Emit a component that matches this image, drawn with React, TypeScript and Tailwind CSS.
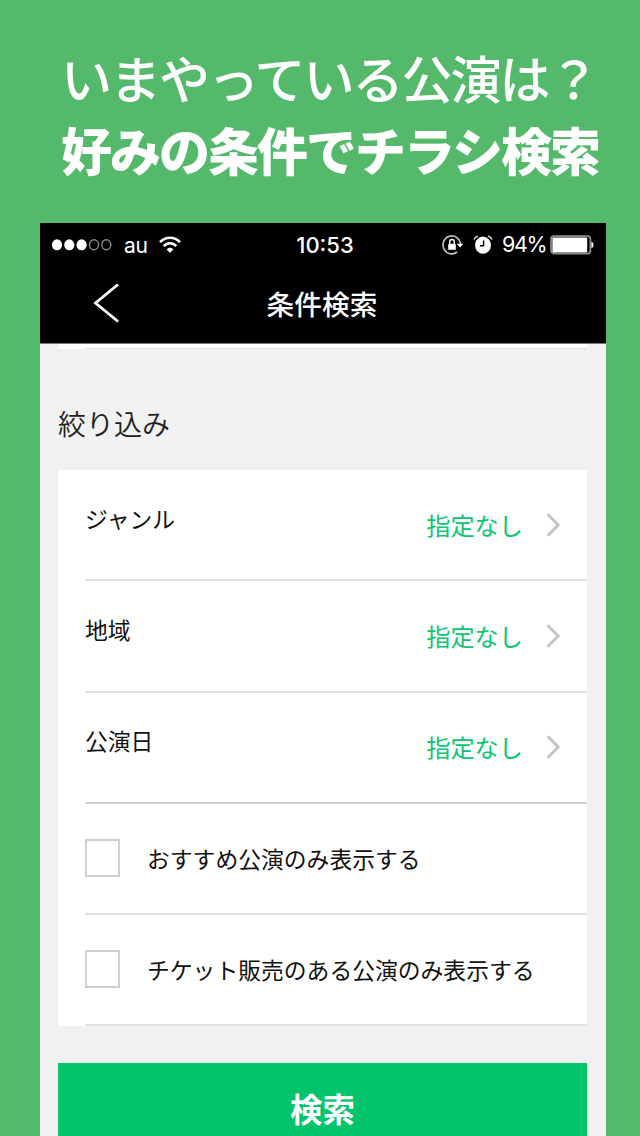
import type { ReactNode } from "react";

const filters = [
  { label: "ジャンル", value: "指定なし", divider: "bg-[#e3e3e5]" },
  { label: "地域", value: "指定なし", divider: "bg-[#e3e3e5]" },
  { label: "公演日", value: "指定なし", divider: "bg-[#cfcfd3]" },
];

const options = ["おすすめ公演のみ表示する", "チケット販売のある公演のみ表示する"];

function SignalDots() {
  return (
    <svg width="62" height="14" viewBox="0 0 62 14" className="shrink-0">
      <ellipse cx="6" cy="6.8" rx="5.1" ry="5.5" fill="#fff" />
      <ellipse cx="18.3" cy="6.8" rx="5.1" ry="5.5" fill="#fff" />
      <ellipse cx="30.6" cy="6.8" rx="5.1" ry="5.5" fill="#fff" />
      <ellipse cx="43" cy="6.8" rx="4.5" ry="5" fill="none" stroke="#8a8a8a" strokeWidth="1.4" />
      <ellipse cx="55.3" cy="6.8" rx="4.5" ry="5" fill="none" stroke="#8a8a8a" strokeWidth="1.4" />
    </svg>
  );
}

function WifiIcon() {
  return (
    <svg width="22" height="18" viewBox="0 0 22 18" className="shrink-0" fill="none" stroke="#fff">
      <path d="M1 6.2 C6.5 0.2 15.5 0.2 21 6.2" strokeWidth="2.6" />
      <path d="M4.7 10.2 C8.2 6.3 13.8 6.3 17.3 10.2" strokeWidth="2.5" />
      <path d="M11 17 L7.7 13.4 C9.5 11.2 12.5 11.2 14.3 13.4 Z" fill="#fff" stroke="none" />
    </svg>
  );
}

function RotationLockIcon() {
  return (
    <svg width="22" height="22" viewBox="0 0 22 22" className="shrink-0">
      <path
        d="M15.2 17.9 A8.7 9 0 1 1 18.4 10"
        fill="none"
        stroke="#c4c4c4"
        strokeWidth="1.6"
      />
      <path d="M14.8 9.8 H21.4 L18.1 13.6 Z" fill="#fff" />
      <rect x="6.2" y="9.8" width="7.6" height="6" rx="0.6" fill="#fff" />
      <path d="M7.7 10.2 V8 A2.3 2.5 0 0 1 12.3 8 V10.2" fill="none" stroke="#fff" strokeWidth="1.4" />
    </svg>
  );
}

function AlarmIcon() {
  return (
    <svg width="20" height="20" viewBox="0 0 20 20" className="shrink-0">
      <ellipse cx="10" cy="10.2" rx="7.9" ry="8.6" fill="#fff" />
      <path d="M10.6 5.4 V10.8 H7" fill="none" stroke="#000" strokeWidth="1.5" />
      <path
        d="M1.2 4.6 C1.6 2.8 3.2 1.4 5 1.2 M15 1.2 C16.8 1.4 18.4 2.8 18.8 4.6"
        fill="none"
        stroke="#d8d8d8"
        strokeWidth="1.5"
      />
    </svg>
  );
}

function BatteryIcon() {
  return (
    <svg width="44" height="20" viewBox="0 0 44 20" className="shrink-0">
      <rect x="1" y="1.2" width="39.4" height="17.4" rx="3" fill="none" stroke="#8c8c8c" strokeWidth="1.8" />
      <rect x="2.4" y="2.4" width="34.8" height="15" rx="1" fill="#fff" />
      <path d="M41.4 6.8 C44.2 7.4 44.2 12.4 41.4 13 Z" fill="#fff" />
    </svg>
  );
}

function Chevron() {
  return (
    <svg width="15" height="26" viewBox="0 0 15 26" className="shrink-0">
      <path d="M1.6 2.2 L12.2 13 L1.6 23.8" fill="none" stroke="#c4c4c9" strokeWidth="2.9" />
    </svg>
  );
}

function StatusBar() {
  return (
    <div className="grid h-[44px] grid-cols-3 items-center px-[11px]">
      <div className="flex items-center">
        <SignalDots />
        <span className="ml-[11px] w-[24px] font-['Inter','Liberation_Sans',sans-serif] text-[21px] leading-none tracking-[-0.4px]">
          au
        </span>
        <span className="ml-[11px] pb-[1px]">
          <WifiIcon />
        </span>
      </div>
      <span className="pb-[1px] pl-[4px] text-center font-['Inter','Liberation_Sans',sans-serif] text-[22px] leading-none font-medium">
        10:53
      </span>
      <div className="flex items-center justify-end">
        <RotationLockIcon />
        <span className="ml-[9px]">
          <AlarmIcon />
        </span>
        <span className="ml-[9px] w-[44px] font-['Inter','Liberation_Sans',sans-serif] text-[21.5px] leading-none tracking-[-1.3px]">
          94%
        </span>
        <span className="ml-[4px] mr-[1px]">
          <BatteryIcon />
        </span>
      </div>
    </div>
  );
}

function Row({ divider, children }: { divider: string; children: ReactNode }) {
  return (
    <div className="flex h-[111.25px] flex-col pl-[27px]">
      <div className="flex flex-1 items-center">{children}</div>
      <div className={`h-[2px] shrink-0 ${divider}`} />
    </div>
  );
}

export default function App() {
  return (
    <div className="flex h-[1136px] w-[640px] flex-col overflow-hidden bg-[#55b96c] font-['Noto_Sans_CJK_JP',sans-serif]">
      {/* Promo copy */}
      <div className="h-[223px] shrink-0 pt-[41px] pl-[61px] text-[51px] leading-[72px] tracking-[-2px] whitespace-nowrap text-white">
        <p className="font-medium">いまやっている公演は？</p>
        <p className="font-black">好みの条件でチラシ検索</p>
      </div>

      {/* Phone screen */}
      <div className="ml-[40px] flex w-[566px] flex-1 flex-col bg-[#f1f1f1]">
        <header className="h-[121px] shrink-0 border-b border-[#777] bg-black text-white">
          <StatusBar />
          <div className="grid h-[76px] grid-cols-[1fr_auto_1fr] items-center pr-[2px]">
            <svg width="28" height="42" viewBox="0 0 28 42" className="mb-[4px] ml-[53px]">
              <path d="M25 2.5 L2.5 21 L25 39.5" fill="none" stroke="#fff" strokeWidth="2.8" />
            </svg>
            <h1 className="pb-[3px] text-[27.7px] leading-none font-medium">条件検索</h1>
          </div>
        </header>

        <div className="mr-[19px] ml-[18px] flex h-[5px] shrink-0 flex-col bg-white">
          <div className="mt-auto ml-[27px] h-[1.5px] bg-[#dcdcdc]" />
        </div>

        <h2 className="flex h-[121px] shrink-0 items-center pt-[27px] pl-[18px] text-[28px] leading-none font-[350] text-[#222]">
          絞り込み
        </h2>

        <div className="mr-[19px] ml-[18px] shrink-0 bg-white text-[22.8px] leading-none text-[#111]">
          {filters.map((filter) => (
            <Row key={filter.label} divider={filter.divider}>
              <span className="pb-[11px]">{filter.label}</span>
              <span className="ml-auto text-[24.2px] text-[#0bc671]">
                {filter.value}
              </span>
              <span className="mr-[26px] ml-[23px]">
                <Chevron />
              </span>
            </Row>
          ))}
          {options.map((option) => (
            <Row key={option} divider="bg-[#e1e1e2]">
              <span className="mb-[1px] h-[38px] w-[35px] shrink-0 border-2 border-[#cfcfcf] bg-white" />
              <span className="ml-[27px] pt-[2px] whitespace-nowrap">{option}</span>
            </Row>
          ))}
        </div>

        <button className="mt-[37px] mr-[19px] ml-[18px] h-[94px] shrink-0 bg-[#03c46b] pb-[4px] text-[32.5px] leading-none font-bold text-white">
          検索
        </button>
      </div>
    </div>
  );
}
